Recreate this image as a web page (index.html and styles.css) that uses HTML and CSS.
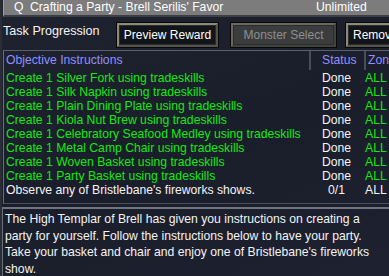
FILE: index.html
```html
<!DOCTYPE html>
<html>
<head>
<meta charset="utf-8">
<link rel="stylesheet" href="styles.css">
</head>
<body>
<div class="window">
  <div class="titlebar">
    <span class="t-q">Q</span>
    <span class="t-name">Crafting a Party - Brell Serilis' Favor</span>
    <span class="t-time">Unlimited</span>
  </div>
  <div class="toolbar">
    <span class="label">Task Progression</span>
    <button class="btn btn-preview">Preview Reward</button>
    <button class="btn btn-monster" disabled>Monster Select</button>
    <button class="btn btn-remove">Remove</button>
  </div>
  <div class="listbox">
    <div class="grid">
      <div class="hd c1">Objective Instructions</div>
      <div class="hd c2">Status</div>
      <div class="hd c3">Zone</div>

      <div class="c1 g">Create 1 Silver Fork using tradeskills</div><div class="c2">Done</div><div class="c3 g">ALL</div>
      <div class="c1 g">Create 1 Silk Napkin using tradeskills</div><div class="c2">Done</div><div class="c3 g">ALL</div>
      <div class="c1 g">Create 1 Plain Dining Plate using tradeskills</div><div class="c2">Done</div><div class="c3 g">ALL</div>
      <div class="c1 g">Create 1 Kiola Nut Brew using tradeskills</div><div class="c2">Done</div><div class="c3 g">ALL</div>
      <div class="c1 g">Create 1 Celebratory Seafood Medley using tradeskills</div><div class="c2">Done</div><div class="c3 g">ALL</div>
      <div class="c1 g">Create 1 Metal Camp Chair using tradeskills</div><div class="c2">Done</div><div class="c3 g">ALL</div>
      <div class="c1 g">Create 1 Woven Basket using tradeskills</div><div class="c2">Done</div><div class="c3 g">ALL</div>
      <div class="c1 g">Create 1 Party Basket using tradeskills</div><div class="c2">Done</div><div class="c3 g">ALL</div>
      <div class="c1">Observe any of Bristlebane's fireworks shows.</div><div class="c2">0/1</div><div class="c3">ALL</div>
    </div>
  </div>
  <div class="desc">The High Templar of Brell has given you instructions on creating a<br>party for yourself. Follow the instructions below to have your party.<br>Take your basket and chair and enjoy one of Bristlebane's fireworks<br>show.</div>
</div>
</body>
</html>
```
FILE: styles.css
```css
html, body {
  margin: 0;
  padding: 0;
}
body {
  width: 389px;
  height: 276px;
  overflow: hidden;
  background: #1c202c;
  font-family: "Liberation Sans", Arial, sans-serif;
  font-size: 12.2px;
  color: #f4f4f4;
}
.window {
  width: 389px;
  height: 276px;
  overflow: hidden;
  background: linear-gradient(160deg, #1f2330 0%, #1a1e2a 50%, #1d2130 100%);
  border-left: 2px solid #2a2d33;
  box-sizing: border-box;
}
.titlebar {
  display: flex;
  align-items: center;
  height: 15px;
  line-height: 15px;
  margin-left: 1px;
  background: #7c7c7c;
  border-left: 1px solid #a0a0a0;
  border-bottom: 2px solid #3c3e44;
  color: #ffffff;
  white-space: nowrap;
  padding-left: 10px;
}
.t-q {
  width: 16px;
}
.t-name {
  flex: 1;
}
.t-time {
  width: 73px;
}
.toolbar {
  display: flex;
  align-items: flex-start;
  height: 33px;
  padding-top: 6px;
  box-sizing: border-box;
  white-space: nowrap;
}
.toolbar > * {
  flex-shrink: 0;
}
.label {
  width: 114px;
  margin-left: 1px;
  margin-top: 1px;
  line-height: 14px;
  font-size: 12.6px;
  color: #f4f4f4;
}
.btn {
  font-family: inherit;
  font-size: 12px;
  height: 24px;
  line-height: 20px;
  padding: 0;
  margin: 0;
  text-align: center;
  box-sizing: border-box;
  border: 2px solid;
  border-color: #8e8a76 #55524a #55524a #8e8a76;
  box-shadow: 0 0 0 1px #07080a, inset 0 0 0 1px #2a2b2c;
  background: #111419;
  color: #ffffff;
  white-space: nowrap;
  overflow: visible;
}
.btn-preview {
  width: 101px;
}
.btn-monster {
  width: 105px;
  margin-left: 13px;
  background: #3a3c3d;
  color: #8e9090;
  border-color: #6a675c #44423c #44423c #6a675c;
}
.btn-remove {
  width: 100px;
  margin-left: 10px;
  text-align: left;
  padding-left: 5px;
}
.listbox {
  margin-left: 1px;
  height: 154px;
  border-top: 1px solid #5a5f6c;
  border-left: 1px solid #6a6f7c;
  border-bottom: 1px solid #4a4e5a;
  box-sizing: border-box;
  overflow: hidden;
}
.grid {
  display: grid;
  grid-template-columns: 305px 55px 1fr;
  grid-template-rows: 20px;
  grid-auto-rows: 14px;
  line-height: 14px;
  white-space: nowrap;
}
.hd {
  height: 19px;
  line-height: 19px;
  color: #8f90ff;
}
.c1 {
  padding-left: 2px;
}
.c2 {
  text-align: center;
}
.c3 {
  padding-left: 1px;
}
.hd.c2 {
  text-align: left;
  padding-left: 11px;
  border-left: 2px solid #4a4d55;
}
.hd.c3 {
  padding-left: 2px;
  border-left: 2px solid #4a4d55;
}
.g {
  color: #10ea10;
}
.desc {
  margin-top: 3px;
  border-top: 2px solid #70747e;
  border-left: 1px solid #6a6f7c;
  padding-left: 2px;
  padding-top: 2px;
  line-height: 16.7px;
  white-space: nowrap;
  color: #f4f4f4;
}
```
